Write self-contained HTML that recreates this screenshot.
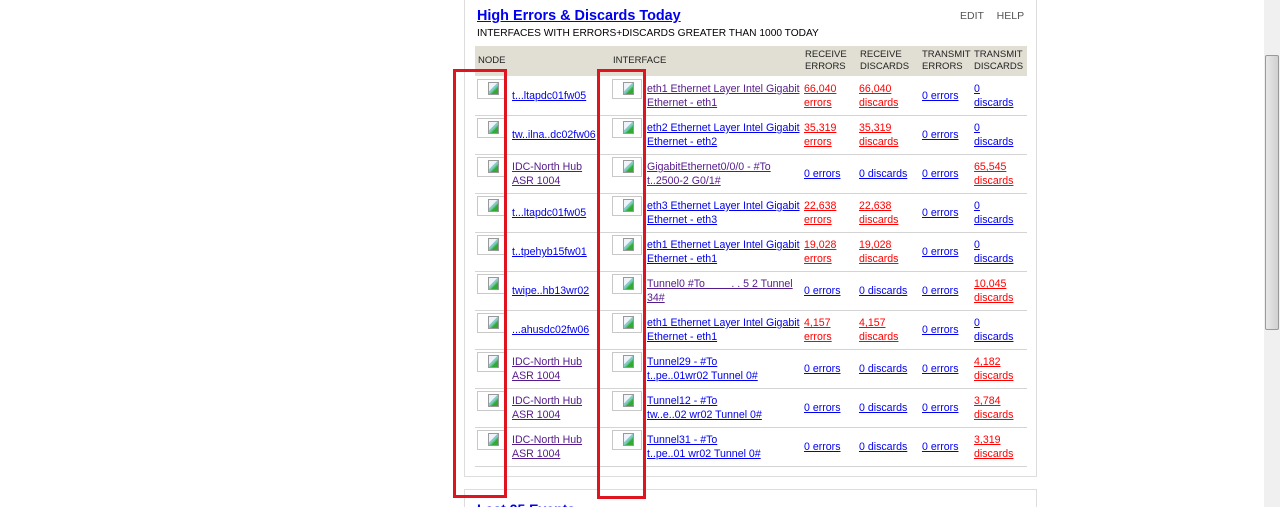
<!DOCTYPE html>
<html style="overflow:hidden;height:507px"><head><meta charset="utf-8"><style>
html,body{overflow:hidden}
body{margin:0;width:1280px;height:507px;overflow:hidden;background:#fff;font-family:"Liberation Sans",Arial,sans-serif;font-size:10.6px;position:relative}
.panel{position:absolute;left:464px;top:-5px;width:573px;height:482px;border:1px solid #ddd;box-sizing:border-box}
.panel2{position:absolute;left:464px;top:489px;width:573px;height:40px;border:1px solid #ddd;box-sizing:border-box}
.title{position:absolute;left:477px;top:8px;font-size:14.4px;font-weight:bold;color:#00e;text-decoration:underline}
.sub{position:absolute;left:477px;top:28px;color:#000;font-size:10.2px}
.eh{position:absolute;left:960px;top:10px;color:#555;font-size:10.5px;word-spacing:10px}
.hdr{position:absolute;left:475px;top:46px;width:552px;height:30px;background:#e1dfd3;font-size:9.5px;color:#222}
.hdr div{position:absolute;top:3px;line-height:12px}
.row{position:absolute;left:475px;width:552px;height:38px;border-bottom:1px solid #d4d4d4}
.c{position:absolute;top:0;height:38px;display:flex;align-items:center;line-height:14px}
a{text-decoration:underline}
.b{color:#00e}.p{color:#551a8b}.r{color:#f00}
.ic{position:absolute;top:2px;width:30px;height:20px;border:1px solid #c8c8c8;box-sizing:border-box;background:#fff}
.ic:after{content:"";position:absolute;left:10px;top:2px;width:11px;height:13px;background:linear-gradient(135deg,#eef4fa 40%,#9cc 41%,#7cb 55%,#3a3 70%);border:1px solid #999;box-sizing:border-box}
.red{position:absolute;border:3px solid #e0141e;box-sizing:border-box}
.sb{position:absolute;left:1264px;top:0;width:16px;height:507px;background:#f0f0f0}
.th{position:absolute;left:1px;top:55px;width:14px;height:275px;background:linear-gradient(90deg,#e8e8e8,#d0d0d0);border:1px solid #999;box-sizing:border-box;border-radius:2px}
</style></head><body>
<div class="panel"></div>
<div class="panel2"></div>
<div style="position:absolute;left:477px;top:501px;font-size:14px;font-weight:bold;color:#00e">Last 25 Events</div>
<div class="title">High Errors &amp; Discards Today</div>
<div class="sub">INTERFACES WITH ERRORS+DISCARDS GREATER THAN 1000 TODAY</div>
<div class="eh">EDIT HELP</div>
<div class="hdr">
<div style="left:3px;top:9px">NODE</div>
<div style="left:138px;top:9px">INTERFACE</div>
<div style="left:330px">RECEIVE<br>ERRORS</div>
<div style="left:385px">RECEIVE<br>DISCARDS</div>
<div style="left:447px">TRANSMIT<br>ERRORS</div>
<div style="left:499px">TRANSMIT<br>DISCARDS</div>
</div>

<div class="row" style="top:77px"><div class="ic" style="left:2px"></div><div class="c" style="left:37px"><a class="b">t...ltapdc01fw05</a></div><div class="ic" style="left:137px"></div><div class="c" style="left:172px"><a class="p">eth1 Ethernet Layer Intel Gigabit<br>Ethernet - eth1</a></div><div class="c" style="left:329px"><a class="r">66,040<br>errors</a></div><div class="c" style="left:384px"><a class="r">66,040<br>discards</a></div><div class="c" style="left:447px"><a class="b">0 errors</a></div><div class="c" style="left:499px"><a class="b">0<br>discards</a></div></div>

<div class="row" style="top:116px"><div class="ic" style="left:2px"></div><div class="c" style="left:37px"><a class="b">tw..ilna..dc02fw06</a></div><div class="ic" style="left:137px"></div><div class="c" style="left:172px"><a class="b">eth2 Ethernet Layer Intel Gigabit<br>Ethernet - eth2</a></div><div class="c" style="left:329px"><a class="r">35,319<br>errors</a></div><div class="c" style="left:384px"><a class="r">35,319<br>discards</a></div><div class="c" style="left:447px"><a class="b">0 errors</a></div><div class="c" style="left:499px"><a class="b">0<br>discards</a></div></div>

<div class="row" style="top:155px"><div class="ic" style="left:2px"></div><div class="c" style="left:37px"><a class="p">IDC-North Hub<br>ASR 1004</a></div><div class="ic" style="left:137px"></div><div class="c" style="left:172px"><a class="p">GigabitEthernet0/0/0 - #To<br>t..2500-2 G0/1#</a></div><div class="c" style="left:329px"><a class="b">0 errors</a></div><div class="c" style="left:384px"><a class="b">0 discards</a></div><div class="c" style="left:447px"><a class="b">0 errors</a></div><div class="c" style="left:499px"><a class="r">65,545<br>discards</a></div></div>

<div class="row" style="top:194px"><div class="ic" style="left:2px"></div><div class="c" style="left:37px"><a class="b">t...ltapdc01fw05</a></div><div class="ic" style="left:137px"></div><div class="c" style="left:172px"><a class="b">eth3 Ethernet Layer Intel Gigabit<br>Ethernet - eth3</a></div><div class="c" style="left:329px"><a class="r">22,638<br>errors</a></div><div class="c" style="left:384px"><a class="r">22,638<br>discards</a></div><div class="c" style="left:447px"><a class="b">0 errors</a></div><div class="c" style="left:499px"><a class="b">0<br>discards</a></div></div>

<div class="row" style="top:233px"><div class="ic" style="left:2px"></div><div class="c" style="left:37px"><a class="b">t..tpehyb15fw01</a></div><div class="ic" style="left:137px"></div><div class="c" style="left:172px"><a class="b">eth1 Ethernet Layer Intel Gigabit<br>Ethernet - eth1</a></div><div class="c" style="left:329px"><a class="r">19,028<br>errors</a></div><div class="c" style="left:384px"><a class="r">19,028<br>discards</a></div><div class="c" style="left:447px"><a class="b">0 errors</a></div><div class="c" style="left:499px"><a class="b">0<br>discards</a></div></div>

<div class="row" style="top:272px"><div class="ic" style="left:2px"></div><div class="c" style="left:37px"><a class="b">twipe..hb13wr02</a></div><div class="ic" style="left:137px"></div><div class="c" style="left:172px"><a class="p">Tunnel0 #To &nbsp; &nbsp; &nbsp; &nbsp; . . 5 2 Tunnel<br>34#</a></div><div class="c" style="left:329px"><a class="b">0 errors</a></div><div class="c" style="left:384px"><a class="b">0 discards</a></div><div class="c" style="left:447px"><a class="b">0 errors</a></div><div class="c" style="left:499px"><a class="r">10,045<br>discards</a></div></div>

<div class="row" style="top:311px"><div class="ic" style="left:2px"></div><div class="c" style="left:37px"><a class="b">...ahusdc02fw06</a></div><div class="ic" style="left:137px"></div><div class="c" style="left:172px"><a class="b">eth1 Ethernet Layer Intel Gigabit<br>Ethernet - eth1</a></div><div class="c" style="left:329px"><a class="r">4,157<br>errors</a></div><div class="c" style="left:384px"><a class="r">4,157<br>discards</a></div><div class="c" style="left:447px"><a class="b">0 errors</a></div><div class="c" style="left:499px"><a class="b">0<br>discards</a></div></div>

<div class="row" style="top:350px"><div class="ic" style="left:2px"></div><div class="c" style="left:37px"><a class="p">IDC-North Hub<br>ASR 1004</a></div><div class="ic" style="left:137px"></div><div class="c" style="left:172px"><a class="b">Tunnel29 - #To<br>t..pe..01wr02 Tunnel 0#</a></div><div class="c" style="left:329px"><a class="b">0 errors</a></div><div class="c" style="left:384px"><a class="b">0 discards</a></div><div class="c" style="left:447px"><a class="b">0 errors</a></div><div class="c" style="left:499px"><a class="r">4,182<br>discards</a></div></div>

<div class="row" style="top:389px"><div class="ic" style="left:2px"></div><div class="c" style="left:37px"><a class="p">IDC-North Hub<br>ASR 1004</a></div><div class="ic" style="left:137px"></div><div class="c" style="left:172px"><a class="b">Tunnel12 - #To<br>tw..e..02 wr02 Tunnel 0#</a></div><div class="c" style="left:329px"><a class="b">0 errors</a></div><div class="c" style="left:384px"><a class="b">0 discards</a></div><div class="c" style="left:447px"><a class="b">0 errors</a></div><div class="c" style="left:499px"><a class="r">3,784<br>discards</a></div></div>

<div class="row" style="top:428px"><div class="ic" style="left:2px"></div><div class="c" style="left:37px"><a class="p">IDC-North Hub<br>ASR 1004</a></div><div class="ic" style="left:137px"></div><div class="c" style="left:172px"><a class="b">Tunnel31 - #To<br>t..pe..01 wr02 Tunnel 0#</a></div><div class="c" style="left:329px"><a class="b">0 errors</a></div><div class="c" style="left:384px"><a class="b">0 discards</a></div><div class="c" style="left:447px"><a class="b">0 errors</a></div><div class="c" style="left:499px"><a class="r">3,319<br>discards</a></div></div>

<div class="red" style="left:453px;top:69px;width:54px;height:429px"></div>
<div class="red" style="left:597px;top:69px;width:49px;height:430px"></div>
<div class="sb"><div class="th"></div></div>
</body></html>
